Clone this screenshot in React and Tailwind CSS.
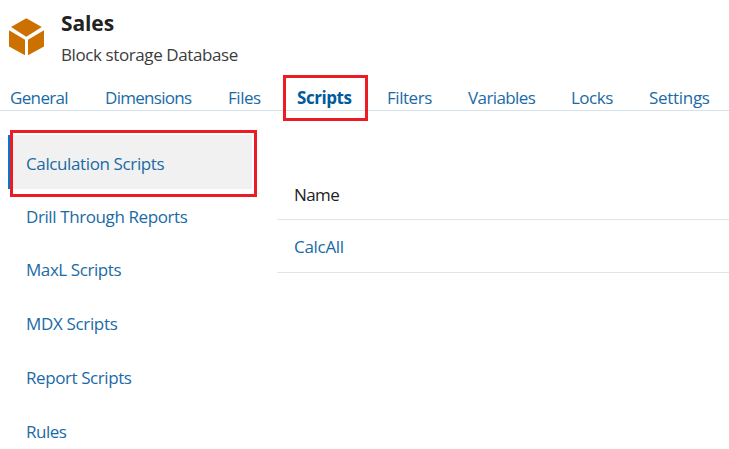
import React from "react";

const tabs = [
  { label: "General", style: "w-[95px] tracking-[-0.65px]" },
  { label: "Dimensions", style: "w-[123px] tracking-[-0.7px]" },
  { label: "Files", style: "w-[69px] tracking-[-0.45px]" },
  { label: "Scripts", style: "w-[90px] tracking-[-0.45px] font-bold !text-[#005a9c]", active: true },
  { label: "Filters", style: "w-[81px] tracking-[-0.45px]" },
  { label: "Variables", style: "w-[103px] tracking-[-0.6px]" },
  { label: "Locks", style: "w-[78px] tracking-[-0.5px]" },
  { label: "Settings", style: "w-[80px] tracking-[-0.3px]" },
];

const sections = [
  { label: "Calculation Scripts", style: "tracking-[-0.38px]", active: true },
  { label: "Drill Through Reports", style: "tracking-[-0.4px]" },
  { label: "MaxL Scripts", style: "tracking-[-0.42px]" },
  { label: "MDX Scripts", style: "tracking-[-0.34px]" },
  { label: "Report Scripts", style: "tracking-[-0.42px]" },
  { label: "Rules", style: "tracking-[-0.5px]" },
];

function CubeIcon() {
  return (
    <svg className="mt-[18px] h-[38px] w-[37px] shrink-0" viewBox="0 0 37 38" fill="#cc7000">
      <path d="M18.3 0.2 L33.8 9 L18.3 18.8 L3 9 Z" />
      <path d="M1 12.3 L17 21.8 V37.3 L1 28.6 Z" />
      <path d="M36 12.3 L20 21.8 V37.3 L36 28.6 Z" />
    </svg>
  );
}

export default function App() {
  return (
    <div className="h-[449px] w-[729px] overflow-hidden bg-white font-['Open_Sans','Noto_Sans',sans-serif] text-[17px] whitespace-nowrap text-[#1a6aa5]">
      <header className="flex h-[75px] gap-[16px] pl-[8px]">
        <CubeIcon />
        <div className="pt-[8px]">
          <h1 className="h-[30px] text-[21px] leading-[30px] font-bold tracking-[-0.1px] text-[#222222]">Sales</h1>
          <p className="mt-[5px] h-[24px] leading-[24px] tracking-[-0.4px] text-[#3c3c3c]">Block storage Database</p>
        </div>
      </header>
      <nav className="flex h-[36px] border-b border-[#d5e2ea] pl-[10px]">
        {tabs.map((t) => (
          <a key={t.label} className={"relative block shrink-0 pt-[11px] leading-[24px] " + t.style}>
            {t.label}
            {t.active && <span className="absolute top-0 left-[-14px] h-[46px] w-[85px] border-3 border-[#ed1c24]" />}
          </a>
        ))}
      </nav>
      <div className="flex pt-[24px]">
        <aside className="w-[277px] shrink-0 pl-[8px]">
          {sections.map((s) =>
            s.active ? (
              <div key={s.label} className="relative flex h-[54px] w-[244px] items-center border-l-3 border-[#0a78c8] bg-[#f1f1f1] pl-[15px]">
                <span className={"mt-[3px] " + s.style}>{s.label}</span>
                <span className="absolute top-[-5px] left-[-1px] h-[67px] w-[247px] border-3 border-[#ed1c24]" />
              </div>
            ) : (
              <div key={s.label} className="flex h-[53.75px] items-center pl-[18px]">
                <span className={"mt-[1px] " + s.style}>{s.label}</span>
              </div>
            )
          )}
        </aside>
        <main className="grow pt-[36px]">
          <div className="flex h-[49px] items-center border-b border-[#e3e3e3] pl-[17px] tracking-[-0.6px] text-[#222222]">Name</div>
          <div className="flex h-[53px] items-center border-b border-[#e3e3e3] pt-[2px] pl-[17px] tracking-[-0.3px]">CalcAll</div>
        </main>
      </div>
    </div>
  );
}
